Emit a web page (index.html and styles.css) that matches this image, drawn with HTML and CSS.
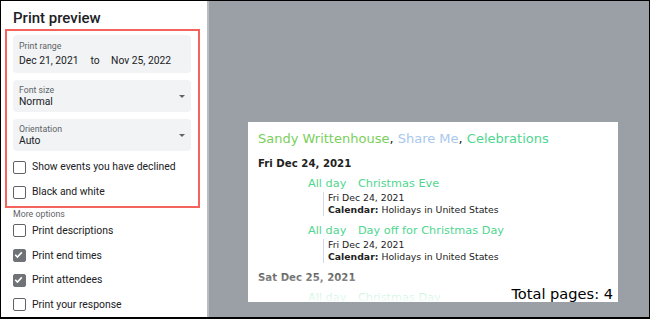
FILE: index.html
```html
<!DOCTYPE html>
<html>
<head>
<meta charset="utf-8">
<link rel="stylesheet" href="styles.css">
</head>
<body>
<div class="frame">
  <aside class="side">
    <h1 class="title">Print preview</h1>
    <div class="highlight">
      <div class="field field-range">
        <div class="label">Print range</div>
        <div class="value range">
          <span>Dec 21, 2021</span><span class="to">to</span><span>Nov 25, 2022</span>
        </div>
      </div>
      <div class="field field-select">
        <div class="field-text">
          <div class="label">Font size</div>
          <div class="value">Normal</div>
        </div>
        <span class="arrow"></span>
      </div>
      <div class="field field-select">
        <div class="field-text">
          <div class="label">Orientation</div>
          <div class="value">Auto</div>
        </div>
        <span class="arrow"></span>
      </div>
      <div class="checks">
        <div class="check-row"><span class="box"></span><span class="check-label">Show events you have declined</span></div>
        <div class="check-row"><span class="box"></span><span class="check-label">Black and white</span></div>
      </div>
    </div>
    <div class="section-label">More options</div>
    <div class="check-row"><span class="box"></span><span class="check-label">Print descriptions</span></div>
    <div class="check-row"><span class="box checked"><svg viewBox="0 0 13 13" width="13" height="13"><polyline points="3.2,6.8 5.4,9 9.8,4.4" fill="none" stroke="#fff" stroke-width="1.6"/></svg></span><span class="check-label">Print end times</span></div>
    <div class="check-row"><span class="box checked"><svg viewBox="0 0 13 13" width="13" height="13"><polyline points="3.2,6.8 5.4,9 9.8,4.4" fill="none" stroke="#fff" stroke-width="1.6"/></svg></span><span class="check-label">Print attendees</span></div>
    <div class="check-row"><span class="box"></span><span class="check-label">Print your response</span></div>
  </aside>
  <main class="viewer">
    <div class="sheet">
      <div class="cal-names"><span class="c-green">Sandy Writtenhouse</span>, <span class="c-blue">Share Me</span>, <span class="c-teal">Celebrations</span></div>
      <div class="date">Fri Dec 24, 2021</div>
      <div class="event">
        <div class="ev-title"><span class="ev-time">All day</span><span>Christmas Eve</span></div>
        <div class="ev-details">
          <div>Fri Dec 24, 2021</div>
          <div><b>Calendar:</b> Holidays in United States</div>
        </div>
      </div>
      <div class="event">
        <div class="ev-title"><span class="ev-time">All day</span><span>Day off for Christmas Day</span></div>
        <div class="ev-details">
          <div>Fri Dec 24, 2021</div>
          <div><b>Calendar:</b> Holidays in United States</div>
        </div>
      </div>
      <div class="date">Sat Dec 25, 2021</div>
      <div class="event">
        <div class="ev-title"><span class="ev-time">All day</span><span>Christmas Day</span></div>
      </div>
      <div class="fade"></div>
      <div class="total">Total pages: 4</div>
    </div>
  </main>
</div>
</body>
</html>
```
FILE: styles.css
```css
* { box-sizing: border-box; }
html, body { margin: 0; padding: 0; }
body { width: 650px; height: 319px; overflow: hidden; background: #000; }

.frame {
  width: 650px;
  height: 319px;
  border-top: 1px solid #000;
  border-left: 1px solid #000;
  border-right: 1px solid #000;
  border-bottom: 2px solid #000;
  display: flex;
  background: #fff;
}

.side {
  width: 208px;
  flex: none;
  background: #fff;
  border-right: 2px solid #b9bdc1;
  font-family: Roboto, "Liberation Sans", sans-serif;
  color: #202124;
}

.title {
  margin: 7px 0 1px 12px;
  font-size: 15px;
  line-height: 20px;
  font-weight: 500;
  color: #202124;
}

.highlight {
  margin-left: 4px;
  width: 195px;
  border: 2px solid #f4645c;
  padding: 4px 7px 1.5px 6px;
}

.field {
  background: #f1f3f4;
  border-radius: 4px;
  padding-left: 6px;
}
.field + .field { margin-top: 7px; }

.field-range { padding-top: 6px; padding-bottom: 6.5px; }
.field-range .value { margin-top: 2.5px; }

.field-select {
  display: flex;
  align-items: center;
  padding-top: 4.5px;
  padding-bottom: 4.5px;
  padding-right: 6.5px;
}
.field-text { flex: 1; }

.label {
  font-size: 8.75px;
  line-height: 11px;
  color: #5f6368;
}
.value {
  font-size: 10.3px;
  line-height: 12px;
  color: #202124;
}
.range { display: flex; }
.to { margin: 0 11.5px 0 12px; }

.arrow {
  width: 0;
  height: 0;
  border-left: 3px solid transparent;
  border-right: 3px solid transparent;
  border-top: 3px solid #5f6368;
}

.checks { margin-top: 3.5px; }

.check-row {
  display: flex;
  align-items: center;
  height: 25px;
}
.side > .check-row { padding-left: 12px; height: 24.7px; }

.box {
  width: 13px;
  height: 13px;
  flex: none;
  border: 1.6px solid #5f6368;
  border-radius: 2px;
  margin-right: 6px;
  display: flex;
}
.box.checked {
  background: #6f7377;
  border-color: #6f7377;
}
.box.checked svg { margin: -1.6px; }

.check-label {
  font-size: 10.4px;
  line-height: 12px;
  color: #202124;
}

.section-label {
  margin: 0.5px 0 0 12px;
  font-size: 8.8px;
  line-height: 10px;
  color: #5f6368;
}

.viewer {
  flex: 1;
  background: #9aa0a6;
  padding: 121px 0 0 39px;
  overflow: hidden;
}

.sheet {
  position: relative;
  width: 370px;
  height: 180px;
  background: #fff;
  overflow: hidden;
  padding: 6.5px 0 0 10px;
  font-family: "DejaVu Sans", sans-serif;
  color: #202124;
}

.cal-names {
  font-size: 13px;
  line-height: 20px;
  white-space: nowrap;
  color: #222;
}
.c-green { color: #79cf5c; }
.c-blue { color: #a9c8ee; }
.c-teal { color: #4fd68f; }

.date {
  margin-top: 7px;
  margin-bottom: 4px;
  font-size: 10.2px;
  line-height: 16px;
  font-weight: bold;
  color: #222;
}

.event + .event { margin-top: 7px; }

.ev-title {
  margin-left: 50px;
  font-size: 11.3px;
  line-height: 16px;
  color: #4fd68f;
  white-space: nowrap;
}
.ev-time { margin-right: 11.5px; }

.ev-details {
  margin-left: 65px;
  border-left: 1px solid #d3d9e4;
  padding-left: 4px;
  font-size: 9.3px;
  line-height: 12px;
  color: #222;
  white-space: nowrap;
}

.fade {
  position: absolute;
  left: 0;
  right: 0;
  bottom: 0;
  height: 42px;
  background: linear-gradient(to bottom, rgba(255,255,255,0), rgba(255,255,255,0.92));
}

.total {
  position: absolute;
  right: 5px;
  bottom: 0;
  font-size: 14.6px;
  line-height: 17px;
  color: #000;
}
```
